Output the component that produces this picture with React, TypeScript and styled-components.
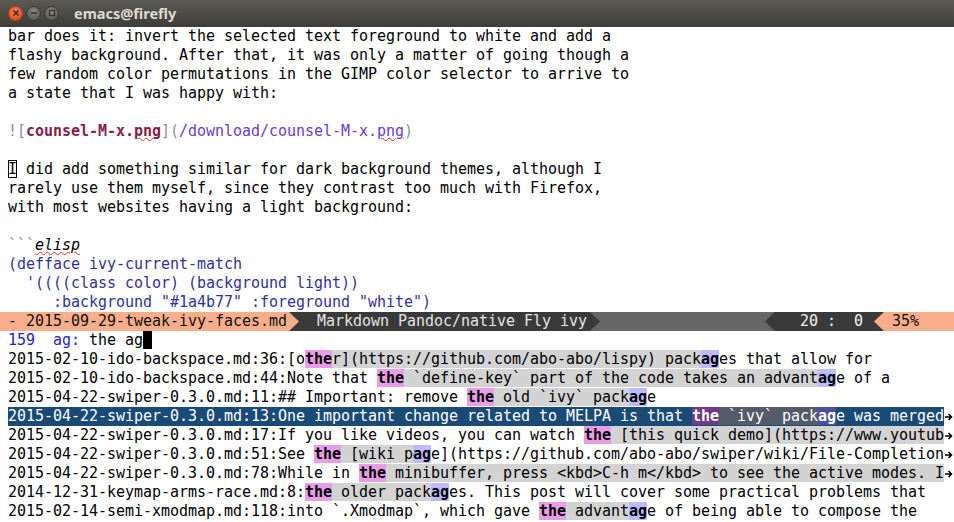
import React from 'react';
import styled, { createGlobalStyle } from 'styled-components';

const Global = createGlobalStyle`
  html, body { margin: 0; padding: 0; background: #ffffff; }
  body { width: 954px; height: 522px; overflow: hidden; }
`;

const MONO = `"DejaVu Sans Mono", "Liberation Mono", monospace`;

const Window = styled.div`
  width: 954px;
  height: 522px;
  display: flex;
  flex-direction: column;
  overflow: hidden;
  background: #ffffff;
  font-family: ${MONO};
  font-size: 15px;
  letter-spacing: -0.031px;
  color: #000000;
`;

const TitleBar = styled.div`
  flex: none;
  height: 27px;
  display: flex;
  align-items: center;
  padding-left: 8px;
  gap: 3px;
  background: linear-gradient(#5b5a55, #3d3c38);
  box-sizing: border-box;
  padding-bottom: 1px;
`;

const WinButton = styled.div<{ $close?: boolean }>`
  width: 15px;
  height: 15px;
  border-radius: 50%;
  box-sizing: border-box;
  display: flex;
  align-items: center;
  justify-content: center;
  background: ${(p) =>
    p.$close
      ? 'radial-gradient(circle at 50% 35%, #f7875d, #e3541f 70%)'
      : 'radial-gradient(circle at 50% 35%, #8a8883, #5e5d58 70%)'};
  border: 1px solid ${(p) => (p.$close ? '#b8431b' : '#3a3935')};
`;

const Title = styled.div`
  margin-left: 12px;
  font-family: "Noto Sans", "DejaVu Sans", sans-serif;
  font-weight: 700;
  font-size: 14.5px;
  letter-spacing: 0;
  color: #dfdbd2;
`;

const Buffer = styled.div`
  flex: none;
  padding-left: 8px;
`;

const Line = styled.div`
  height: 19px;
  line-height: 19px;
  white-space: pre;
  overflow: hidden;
`;

const Grey = styled.span`
  color: #8e8e8e;
`;

const LinkText = styled.span`
  color: #86204f;
  font-weight: 700;
`;

const Url = styled.span`
  color: #6b3ad8;
`;

const Spell = styled.span`
  text-decoration: underline wavy #ff2020;
  text-decoration-thickness: 1px;
  text-underline-offset: 1px;
`;

const Italic = styled.span`
  font-style: italic;
`;

const Code = styled.span`
  color: #30329c;
`;

const HollowCursor = styled.span`
  box-shadow: inset 0 0 0 1px #000000;
`;

const ModeLine = styled.div`
  flex: none;
  height: 19px;
  line-height: 19px;
  display: flex;
  white-space: pre;
`;

const MLSeg = styled.div<{ $bg: string; $fg: string; $w?: number; $pl: number; $grow?: boolean }>`
  background: ${(p) => p.$bg};
  color: ${(p) => p.$fg};
  padding-left: ${(p) => p.$pl}px;
  box-sizing: border-box;
  ${(p) => (p.$w ? `width: ${p.$w}px; flex: none;` : '')}
  ${(p) => (p.$grow ? 'flex: 1;' : '')}
  overflow: hidden;
`;

const ArrowBox = styled.svg`
  display: block;
  flex: none;
`;

const Arrow: React.FC<{ from: string; to: string; left?: boolean }> = ({ from, to, left }) => (
  <ArrowBox width={10} height={19} viewBox="0 0 10 19">
    {left ? (
      <>
        <rect x={0} y={0} width={10} height={19} fill={from} />
        <polygon points="10,0 0,9.5 10,19" fill={to} />
      </>
    ) : (
      <>
        <rect x={0} y={0} width={10} height={19} fill={to} />
        <polygon points="0,0 10,9.5 0,19" fill={from} />
      </>
    )}
  </ArrowBox>
);

const Mini = styled.div`
  flex: none;
  padding-left: 8px;
`;

const Prompt = styled.span`
  color: #2323cf;
`;

const BlockCursor = styled.span`
  background: #000000;
`;

const ResultRow = styled.div`
  display: flex;
  height: 19px;
  line-height: 19px;
`;

const RowText = styled.div<{ $sel?: boolean }>`
  width: 936px;
  flex: none;
  white-space: pre;
  overflow: hidden;
  background: ${(p) => (p.$sel ? '#1a4b77' : 'transparent')};
  color: ${(p) => (p.$sel ? '#ffffff' : '#000000')};
`;

const Fringe = styled.div`
  width: 10px;
  flex: none;
  display: flex;
  align-items: center;
  padding-left: 1px;
  box-sizing: border-box;
`;

type Kind = 'n' | 'm' | 't' | 'a';

const bgFor = (k: Kind, sel: boolean) => {
  if (k === 'm') return sel ? '#555b68' : '#d3d3d3';
  if (k === 't') return sel ? '#70398a' : '#e99ce8';
  if (k === 'a') return sel ? '#4b4fa4' : '#bbbbff';
  return 'transparent';
};

const Seg = styled.span<{ $k: Kind; $sel: boolean }>`
  background: ${(p) => bgFor(p.$k, p.$sel)};
  font-weight: ${(p) => (p.$k === 't' || p.$k === 'a' ? 700 : 400)};
`;

const TruncArrow = () => (
  <svg width={8} height={8} viewBox="0 0 8 8">
    <path d="M0 4 H6.5 M3.5 1 L6.5 4 L3.5 7" stroke="#000" strokeWidth={1.6} fill="none" />
  </svg>
);

type Row = { segs: [string, Kind?][]; sel?: boolean; trunc?: boolean };

const rows: Row[] = [
  {
    segs: [
      ['2015-02-10-ido-backspace.md:36:[o'],
      ['the', 't'],
      ['r](https://github.com/abo-abo/lispy) pack', 'm'],
      ['ag', 'a'],
      ['es that allow for'],
    ],
  },
  {
    segs: [
      ['2015-02-10-ido-backspace.md:44:Note that '],
      ['the', 't'],
      [' `define-key` part of the code takes an advant', 'm'],
      ['ag', 'a'],
      ['e of a'],
    ],
  },
  {
    segs: [
      ['2015-04-22-swiper-0.3.0.md:11:## Important: remove '],
      ['the', 't'],
      [' old `ivy` pack', 'm'],
      ['ag', 'a'],
      ['e'],
    ],
  },
  {
    sel: true,
    trunc: true,
    segs: [
      ['2015-04-22-swiper-0.3.0.md:13:One important change related to MELPA is that '],
      ['the', 't'],
      [' `ivy` pack', 'm'],
      ['ag', 'a'],
      ['e was merged'],
    ],
  },
  {
    trunc: true,
    segs: [
      ['2015-04-22-swiper-0.3.0.md:17:If you like videos, you can watch '],
      ['the', 't'],
      [' [this quick demo](https://www.youtub', 'm'],
    ],
  },
  {
    trunc: true,
    segs: [
      ['2015-04-22-swiper-0.3.0.md:51:See '],
      ['the', 't'],
      [' [wiki p', 'm'],
      ['ag', 'a'],
      ['e](https://github.com/abo-abo/swiper/wiki/File-Completion'],
    ],
  },
  {
    trunc: true,
    segs: [
      ['2015-04-22-swiper-0.3.0.md:78:While in '],
      ['the', 't'],
      [' minibuffer, press <kbd>C-h m</kbd> to see the active modes. I', 'm'],
    ],
  },
  {
    segs: [
      ['2014-12-31-keymap-arms-race.md:8:'],
      ['the', 't'],
      [' older pack', 'm'],
      ['ag', 'a'],
      ['es. This post will cover some practical problems that'],
    ],
  },
  {
    segs: [
      ['2015-02-14-semi-xmodmap.md:118:into `.Xmodmap`, which gave '],
      ['the', 't'],
      [' advant', 'm'],
      ['ag', 'a'],
      ['e of being able to compose the'],
    ],
  },
];

const SALMON = '#f8ae8b';
const DARK = '#3a3a3a';
const MID = '#666666';

export default function App() {
  return (
    <Window>
      <Global />
      <TitleBar>
        <WinButton $close>
          <svg width={8} height={8} viewBox="0 0 8 8">
            <path d="M1.5 1.5 L6.5 6.5 M6.5 1.5 L1.5 6.5" stroke="#4a1c0c" strokeWidth={1.5} />
          </svg>
        </WinButton>
        <WinButton>
          <svg width={8} height={8} viewBox="0 0 8 8">
            <path d="M1 4 H7" stroke="#34332f" strokeWidth={1.6} />
          </svg>
        </WinButton>
        <WinButton>
          <svg width={8} height={8} viewBox="0 0 8 8">
            <rect x={1.5} y={1.5} width={5} height={5} stroke="#34332f" strokeWidth={1.3} fill="none" />
          </svg>
        </WinButton>
        <Title>emacs@firefly</Title>
      </TitleBar>

      <Buffer>
        <Line>bar does it: invert the selected text foreground to white and add a</Line>
        <Line>flashy background. After that, it was only a matter of going though a</Line>
        <Line>few random color permutations in the GIMP color selector to arrive to</Line>
        <Line>a state that I was happy with:</Line>
        <Line> </Line>
        <Line>
          <Grey>![</Grey>
          <LinkText>
            counsel-M-x.<Spell>png</Spell>
          </LinkText>
          <Grey>](</Grey>
          <Url>
            /download/counsel-M-x.<Spell>png</Spell>
          </Url>
          <Grey>)</Grey>
        </Line>
        <Line> </Line>
        <Line>
          <HollowCursor>I</HollowCursor> did add something similar for dark background themes, although I
        </Line>
        <Line>rarely use them myself, since they contrast too much with Firefox,</Line>
        <Line>with most websites having a light background:</Line>
        <Line> </Line>
        <Line>
          <Grey>```</Grey>
          <Italic>
            <Spell>elisp</Spell>
          </Italic>
        </Line>
        <Line>
          <Code>(defface ivy-current-match</Code>
        </Line>
        <Line>
          <Code>{"  '((((class color) (background light))"}</Code>
        </Line>
        <Line>
          <Code>{'     :background "#1a4b77" :foreground "white")'}</Code>
        </Line>
      </Buffer>

      <ModeLine>
        <MLSeg $bg={SALMON} $fg="#111111" $w={289} $pl={8}>
          - 2015-09-29-tweak-ivy-faces.md
        </MLSeg>
        <Arrow from={SALMON} to={DARK} />
        <MLSeg $bg={DARK} $fg="#e4e4e4" $w={291} $pl={18}>
          Markdown Pandoc/native Fly ivy
        </MLSeg>
        <Arrow from={DARK} to={MID} />
        <MLSeg $bg={MID} $fg="#e4e4e4" $pl={0} $grow />
        <Arrow from={MID} to={DARK} left />
        <MLSeg $bg={DARK} $fg="#f0f0f0" $w={99} $pl={25}>
          20 :  0
        </MLSeg>
        <Arrow from={DARK} to={SALMON} left />
        <MLSeg $bg={SALMON} $fg="#111111" $w={70} $pl={8}>
          35%
        </MLSeg>
      </ModeLine>

      <Mini>
        <Line>
          <Prompt>159  ag: </Prompt>the ag<BlockCursor> </BlockCursor>
        </Line>
      </Mini>

      <Buffer>
        {rows.map((r, i) => (
          <ResultRow key={i}>
            <RowText $sel={r.sel}>
              {r.segs.map(([text, k], j) => (
                <Seg key={j} $k={k ?? 'n'} $sel={!!r.sel}>
                  {text}
                </Seg>
              ))}
            </RowText>
            <Fringe>{r.trunc ? <TruncArrow /> : null}</Fringe>
          </ResultRow>
        ))}
      </Buffer>
    </Window>
  );
}
